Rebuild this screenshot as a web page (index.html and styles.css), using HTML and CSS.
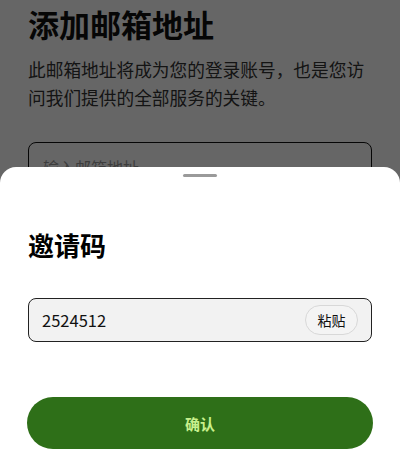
FILE: index.html
```html
<!DOCTYPE html>
<html lang="zh-CN">
<head>
<meta charset="utf-8">
<title>邀请码</title>
<link rel="stylesheet" href="styles.css">
</head>
<body>
<main class="page">
  <h1 class="page-title">添加邮箱地址</h1>
  <p class="page-desc">此邮箱地址将成为您的登录账号，也是您访问我们提供的全部服务的关键。</p>
  <div class="email-field">输入邮箱地址</div>
</main>
<div class="overlay"></div>
<section class="sheet">
  <div class="handle"></div>
  <h2 class="sheet-title">邀请码</h2>
  <div class="code-field">
    <span class="code-value">2524512</span>
    <button class="paste-btn" type="button">粘贴</button>
  </div>
  <button class="confirm-btn" type="button">确认</button>
</section>
</body>
</html>
```
FILE: styles.css
```css
* { box-sizing: border-box; }
html, body { margin: 0; padding: 0; }
body {
  width: 400px;
  height: 461px;
  overflow: hidden;
  background: #fff;
  font-family: "Noto Sans CJK SC", "Noto Sans", sans-serif;
  color: #111;
}
.page {
  padding: 4px 28px 0;
  display: flex;
  flex-direction: column;
}
.page-title {
  margin: 0;
  font-size: 31px;
  line-height: 40px;
  font-weight: 700;
  color: #111;
}
.page-desc {
  margin: 11px 0 0;
  font-size: 17.7px;
  line-height: 28px;
  color: #333;
}
.email-field {
  margin-top: 31px;
  height: 56px;
  border: 1px solid #111;
  border-radius: 8px;
  padding: 12px 14px;
  font-size: 16px;
  line-height: 24px;
  color: #999;
}
.overlay {
  position: fixed;
  inset: 0;
  background: rgba(0, 0, 0, 0.6);
}
.sheet {
  position: fixed;
  left: 0;
  right: 0;
  bottom: 0;
  height: 294px;
  background: #fff;
  border-radius: 16px 16px 0 0;
  padding: 0 28px;
  display: flex;
  flex-direction: column;
}
.handle {
  align-self: center;
  margin-top: 7px;
  width: 34px;
  height: 3px;
  border-radius: 2px;
  background: #9a9a9a;
}
.sheet-title {
  margin: 51px 0 0;
  font-size: 26px;
  line-height: 34px;
  font-weight: 700;
  color: #000;
}
.code-field {
  margin-top: 36px;
  height: 44px;
  border: 1px solid #222;
  border-radius: 8px;
  background: #f2f2f2;
  padding: 0 13px;
  display: flex;
  align-items: center;
  justify-content: space-between;
}
.code-value {
  font-size: 16.5px;
  color: #111;
}
.paste-btn {
  height: 30px;
  width: 53px;
  border: 1px solid #d8d8d8;
  border-radius: 15px;
  background: #f4f4f4;
  font-family: inherit;
  font-size: 14px;
  color: #111;
  padding: 0;
}
.confirm-btn {
  margin: 55px -1px 0;
  height: 52px;
  border: none;
  border-radius: 26px;
  background: #2e6f18;
  color: #c8f08c;
  font-family: inherit;
  font-size: 15px;
  font-weight: 700;
}
```
